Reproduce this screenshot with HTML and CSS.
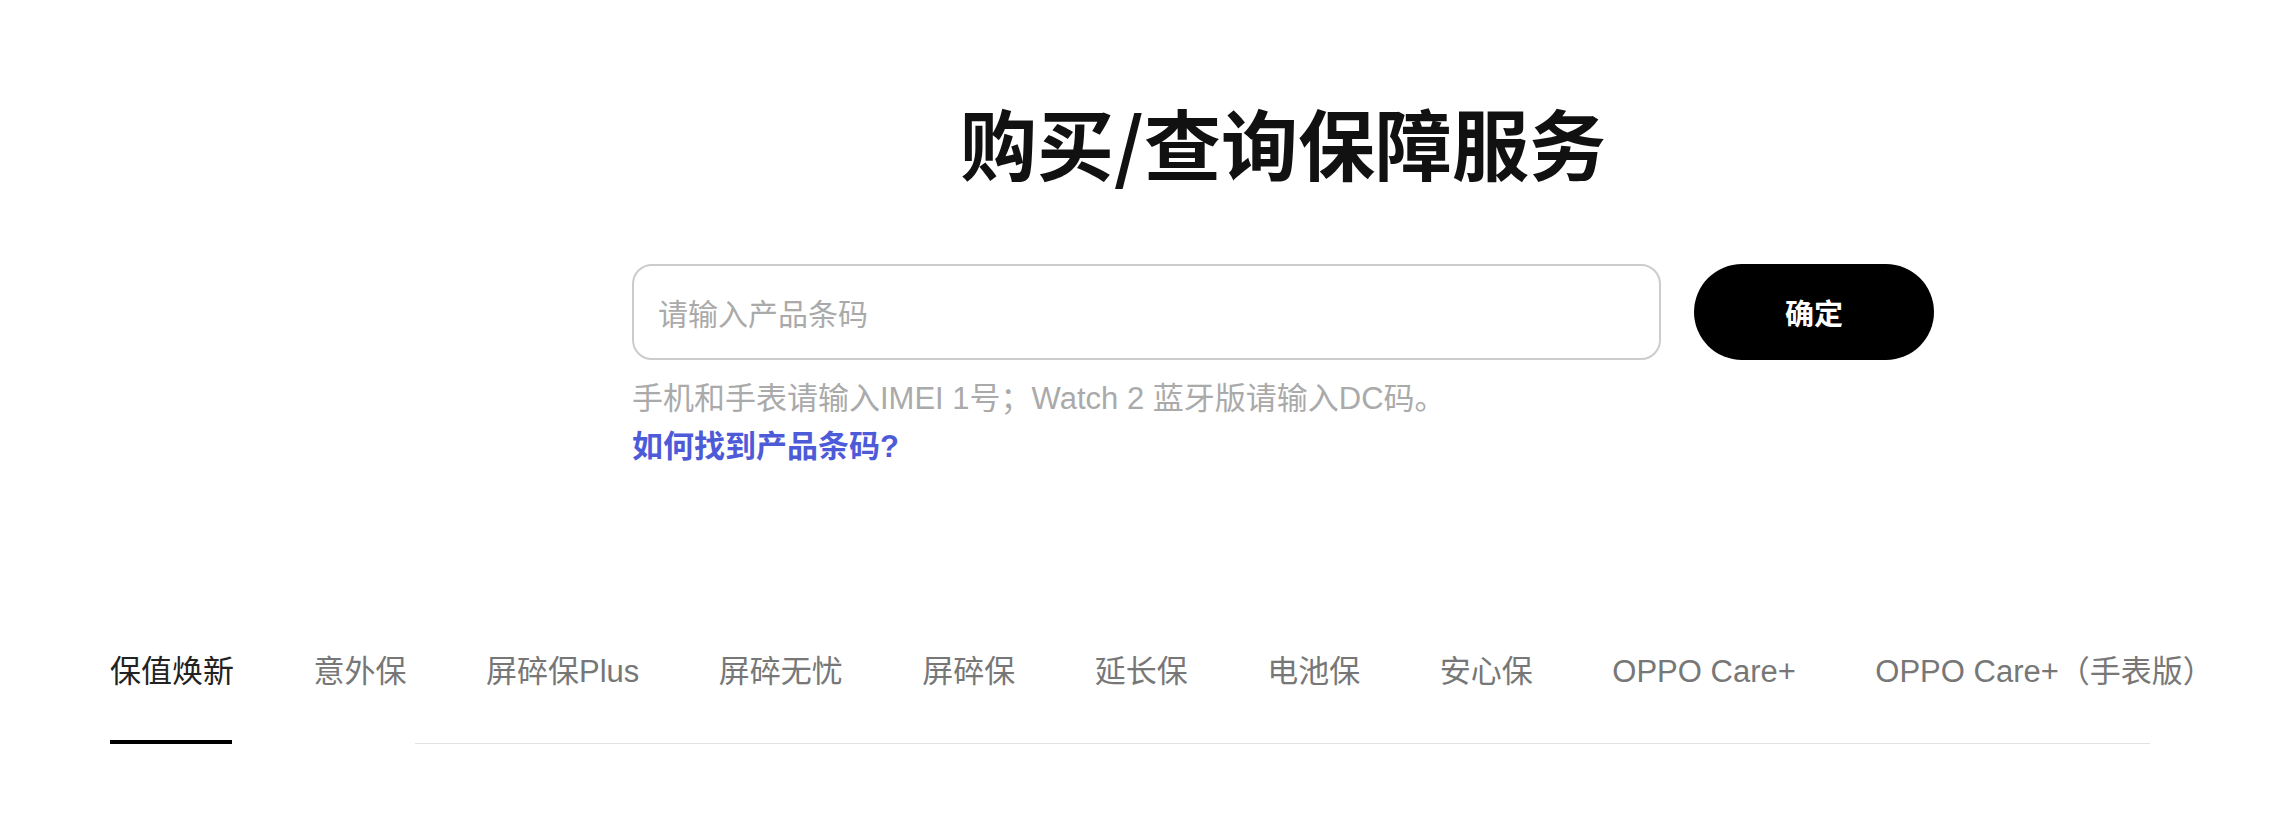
FILE: index.html
```html
<!DOCTYPE html>
<html lang="zh-CN">
<head>
    <meta charset="UTF-8">
    <meta name="viewport" content="width=device-width, initial-scale=1.0">
    <title>购买/查询保障服务</title>
    <link rel="stylesheet" href="styles.css">
</head>
<body>

    <div class="search-section">
        <h1 class="page-title">购买/查询保障服务</h1>
        <form class="search-form" onsubmit="return false">
            <input type="text" class="code-input" placeholder="请输入产品条码">
            <button type="submit" class="confirm-btn">确定</button>
        </form>
        <p class="hint">手机和手表请输入IMEI 1号；Watch 2 蓝牙版请输入DC码。</p>
        <a href="#" class="help-link">如何找到产品条码?</a>
    </div>

    <div class="service-tabs">
        <ul class="tab-list">
            <li class="tab active">保值焕新</li>
            <li class="tab">意外保</li>
            <li class="tab">屏碎保Plus</li>
            <li class="tab">屏碎无忧</li>
            <li class="tab">屏碎保</li>
            <li class="tab">延长保</li>
            <li class="tab">电池保</li>
            <li class="tab">安心保</li>
            <li class="tab">OPPO Care+</li>
            <li class="tab">OPPO Care+（手表版）</li>
        </ul>
        <div class="tab-track">
            <span class="track-thumb"></span>
            <span class="track-line"></span>
        </div>
    </div>

</body>
</html>
```

FILE: styles.css
```css
body {
    font-family: "Liberation Sans", "Noto Sans CJK SC", sans-serif;
    background-color: #fff;
    color: #111;
    margin: 0;
    padding: 0;
}

.search-section {
    width: 1302px;
    margin-left: 632px;
    padding-top: 94px;
}
.page-title {
    font-family: "Noto Sans CJK SC", sans-serif;
    font-size: 77px;
    font-weight: 700;
    line-height: 96px;
    text-align: center;
    margin: 0 0 74px;
}

.search-form {
    display: flex;
    gap: 33px;
}
.code-input {
    flex: 1;
    height: 96px;
    box-sizing: border-box;
    padding: 0 24px;
    border: 2px solid #ccc;
    border-radius: 20px;
    font-family: "Noto Sans CJK SC", sans-serif;
    font-size: 30px;
    color: #333;
    outline: none;
}
.code-input::placeholder {
    color: #aaa;
}
.confirm-btn {
    width: 240px;
    height: 96px;
    border: none;
    border-radius: 48px;
    background-color: #000;
    color: #fff;
    font-family: "Noto Sans CJK SC", sans-serif;
    font-size: 29px;
    font-weight: 700;
    cursor: pointer;
}

.hint {
    margin: 15px 0 0;
    font-size: 31px;
    line-height: 48px;
    color: #aaa;
}
.help-link {
    display: inline-block;
    font-size: 31px;
    line-height: 48px;
    font-weight: 700;
    color: #4d5bd8;
    text-decoration: none;
}

.service-tabs {
    padding: 0 110px;
    margin-top: 179px;
}
.tab-list {
    display: flex;
    gap: 79.5px;
    list-style: none;
    margin: 0;
    padding: 0;
}
.tab {
    font-size: 31px;
    line-height: 44px;
    color: #777;
    white-space: nowrap;
}
.tab.active {
    color: #222;
}

.tab-track {
    display: flex;
    align-items: flex-end;
    margin-top: 46px;
}
.track-thumb {
    width: 122px;
    height: 4px;
    background-color: #000;
}
.track-line {
    width: 1735px;
    height: 2px;
    margin-left: 183px;
    margin-bottom: -1px;
    background-color: #e2e2e2;
}
```
